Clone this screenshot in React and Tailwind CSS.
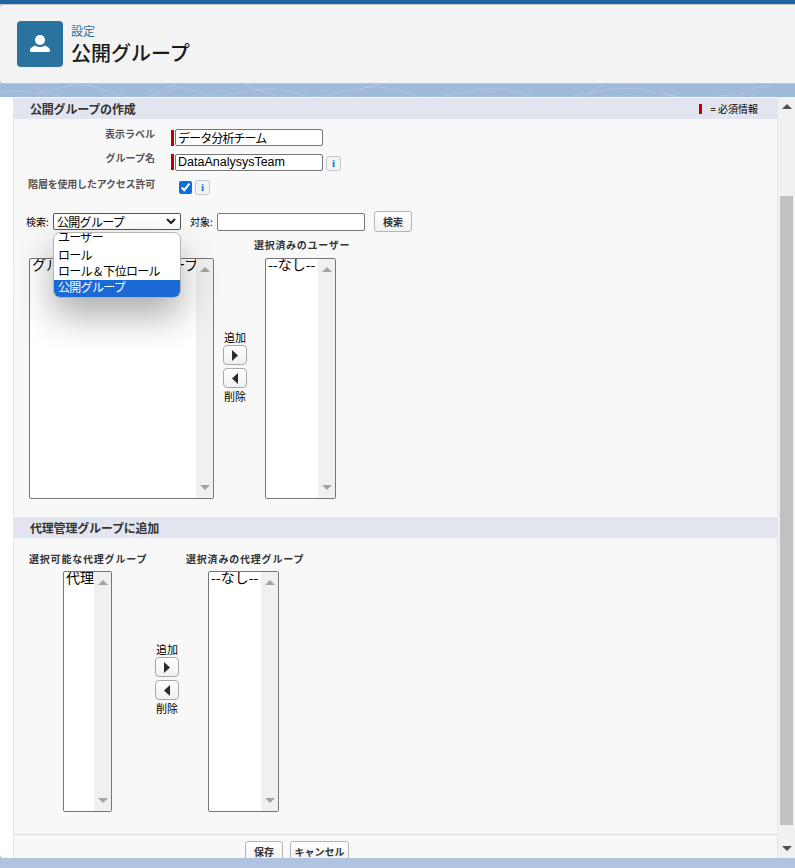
import React from 'react';

const FONT = "font-['Noto_Sans_CJK_JP','Liberation_Sans',sans-serif]";

function Contours({ className }) {
  // faint topographic lines in the page background
  return (
    <svg className={className} width="795" height="13" viewBox="0 0 795 13" fill="none" stroke="#ffffff" strokeOpacity="0.16" strokeWidth="1">
      <path d="M0 9C20 2 35 14 55 6S90 0 110 8s40 6 60-2 30 8 50 6 40-10 60-6 30 10 55 4 40-10 60-4 30 10 60 4 40-8 60-2 40 8 70 2 50-8 70-2 40 6 90 2" />
      <path d="M30 0c10 6 20 10 14 13M150 13c8-6 18-10 26-13M245 0c14 8 26 8 34 13M360 13c-6-6 6-12 22-13M480 2a9 6 0 1 0 18 0M585 13c8-8 16-10 20-13M660 0c-4 6 8 12 20 13M740 13c4-6 14-10 30-11" />
    </svg>
  );
}

function Triangle({ dir, className }) {
  const d = {
    up: 'M0 6 L5 1 L10 6 Z',
    down: 'M0 1 L10 1 L5 6 Z',
  }[dir];
  return (
    <svg width="10" height="7" viewBox="0 0 10 7" className={className} fill="currentColor">
      <path d={d} />
    </svg>
  );
}

function ListBox({ width, text }) {
  return (
    <div style={{ width }} className="flex h-[241px] shrink-0 overflow-hidden rounded-[2px] border border-[#767676] bg-white">
      <div className="-mt-[2px] min-w-0 flex-1 overflow-hidden whitespace-nowrap pl-[2px] text-[14px] leading-[14px] text-black">{text}</div>
      <div className="flex w-[17px] shrink-0 flex-col items-center justify-between bg-[#f0f0f0] py-[7px] text-[#a3a3a3]">
        <Triangle dir="up" />
        <Triangle dir="down" />
      </div>
    </div>
  );
}

function MoveButtons() {
  return (
    <div className="flex w-[24px] flex-col items-center text-[11px] leading-[14px] text-black">
      <span className="mb-[1px]">追加</span>
      <button className="flex h-[20px] w-[24px] items-center justify-center rounded-[4px] border border-[#a9a9a9] bg-gradient-to-b from-white to-[#f0f0f0]">
        <svg width="6" height="11" viewBox="0 0 6 11" fill="#2b2b2b"><path d="M0 0 L6 5.5 L0 11 Z" /></svg>
      </button>
      <button className="mt-[3px] flex h-[20px] w-[24px] items-center justify-center rounded-[4px] border border-[#a9a9a9] bg-gradient-to-b from-white to-[#f0f0f0]">
        <svg width="6" height="11" viewBox="0 0 6 11" fill="#2b2b2b"><path d="M6 0 L0 5.5 L6 11 Z" /></svg>
      </button>
      <span className="mt-[1px]">削除</span>
    </div>
  );
}

function InfoButton() {
  return (
    <span className="flex h-[15px] w-[15px] shrink-0 items-center justify-center rounded-[3px] border border-[#c9c9c9] bg-[#f3f3f3] font-['Liberation_Serif',serif] text-[11px] font-bold leading-none text-[#0b6fd6]">
      i
    </span>
  );
}

function SectionHeader({ children, right }) {
  return (
    <div className="flex h-[21px] items-center justify-between bg-[#e2e5ef] pl-[16px] pr-[19px]">
      <h3 className="text-[12px] font-bold leading-none tracking-[-0.2px] text-[#333]">{children}</h3>
      {right}
    </div>
  );
}

function PlainButton({ children, className = '' }) {
  return (
    <button className={`rounded-[3px] border border-[#b5b5b5] bg-gradient-to-b from-white to-[#f1f1f1] text-[10px] font-bold leading-none text-[#333] ${className}`}>
      {children}
    </button>
  );
}

export default function App() {
  return (
    <div className={`${FONT} flex h-[868px] w-[795px] flex-col overflow-hidden bg-[#b0c4df]`}>
      <div className="h-[4px] shrink-0 bg-[#2164a4]" />

      {/* Page header */}
      <div className="flex h-[80px] shrink-0 items-center rounded-l-[4px] border-y border-[#c4c4c4] bg-[#f3f3f3] pl-[17px]">
        <div className="flex h-[46px] w-[46px] items-center justify-center rounded-[4px] bg-[#2a739e]">
          <svg width="20" height="20" viewBox="0 0 20 20" fill="#fff">
            <circle cx="10" cy="6" r="5" />
            <path d="M0 16.5C0 13.6 3 12.4 5.5 11.4 7 12.6 8.4 13 10 13s3-.4 4.5-1.6C17 12.4 20 13.6 20 16.5c0 1-.7 1.5-1.5 1.5h-17C.7 18 0 17.5 0 16.5z" />
          </svg>
        </div>
        <div className="ml-[8px] flex flex-col">
          <span className="text-[12px] leading-[14px] text-[#2a739e]">設定</span>
          <h1 className="mt-[3px] text-[20px] font-medium leading-[24px] text-[#1a1a1a]">公開グループ</h1>
        </div>
      </div>

      <div className="h-[13px] shrink-0 bg-[#9fbadb]">
        <Contours className="block" />
      </div>

      {/* Main panel */}
      <div className="flex h-[761px] shrink-0 overflow-hidden rounded-bl-[4px] bg-white pl-[1px]">
        <div className="w-[13px] shrink-0 border-r border-[#e6e6e6] bg-white" />
        <div className="relative w-[763px] shrink-0 bg-[#f8f8f8] pt-[1px]">
          <SectionHeader
            right={
              <span className="flex items-center text-[10px] leading-none text-black">
                <span className="mr-[8px] h-[10px] w-[3px] bg-[#c00000]" />= 必須情報
              </span>
            }
          >
            公開グループの作成
          </SectionHeader>

          {/* Basic fields */}
          <div className="mt-[10px] flex items-center">
            <label className="w-[141px] -translate-y-[4px] text-right text-[10px] font-bold leading-none text-[#555]">表示ラベル</label>
            <span className="ml-[16px] h-[16px] w-[3px] bg-[#c00000]" />
            <input readOnly value="データ分析チーム" className="ml-[1px] h-[17px] w-[148px] rounded-[2px] border border-[#767676] bg-white px-[2px] text-[12px] leading-none tracking-[-0.9px] text-black outline-none" />
          </div>
          <div className="mt-[7px] flex items-center">
            <label className="w-[141px] -translate-y-[4px] text-right text-[10px] font-bold leading-none text-[#555]">グループ名</label>
            <span className="ml-[16px] h-[16px] w-[3px] bg-[#c00000]" />
            <input readOnly value="DataAnalysysTeam" className="ml-[1px] h-[17px] w-[148px] rounded-[2px] border border-[#767676] bg-white px-[2px] font-['Liberation_Sans',sans-serif] text-[12.5px] leading-none text-black outline-none" />
            <span className="ml-[3px] mt-[3px]"><InfoButton /></span>
          </div>
          <div className="mt-[9px] flex items-center">
            <label className="w-[141px] -translate-y-[4px] whitespace-nowrap text-right text-[10px] font-bold leading-none tracking-[-0.2px] text-[#555]">階層を使用したアクセス許可</label>
            <input type="checkbox" readOnly checked className="ml-[24px] h-[13px] w-[13px] accent-[#0b6fe0]" />
            <span className="ml-[3px]"><InfoButton /></span>
          </div>

          {/* Search row */}
          <div className="relative mt-[16px] flex h-[21px] items-center pl-[12px] text-[10px] leading-none text-black">
            <span className="w-[27px]">検索:</span>
            <div className="flex h-[17px] w-[128px] items-center justify-between rounded-[2px] border border-[#555] bg-white pl-[3px] pr-[4px] text-[12px] tracking-[-0.7px]">
              公開グループ
              <svg width="10" height="7" viewBox="0 0 10 7" fill="none" stroke="#222" strokeWidth="2"><path d="M1 1l4 4 4-4" /></svg>
            </div>
            <span className="ml-[9px] w-[27px]">対象:</span>
            <input readOnly className="h-[18px] w-[148px] rounded-[2px] border border-[#767676] bg-white outline-none" />
            <PlainButton className="ml-[9px] h-[21px] w-[38px]">検索</PlainButton>

            {/* open select menu */}
            <div className="absolute left-[39px] top-[21px] z-10 h-[66px] w-[128px] overflow-hidden rounded-[7px] border border-[#b5b5b5] bg-white text-[12px] leading-[16px] tracking-[-0.7px] shadow-[0_18px_36px_rgba(0,0,0,0.32)]">
              <div className="-mt-[4px] pl-[4px]">ユーザー</div>
              <div className="mt-[2px] pl-[4px]">ロール</div>
              <div className="pb-[1px] pl-[4px]">ロール &amp; 下位ロール</div>
              <div className="h-[17px] bg-[#1a69d4] pl-[4px] leading-[14px] text-white">公開グループ</div>
            </div>
          </div>

          {/* Member pickers */}
          <div className="mt-[7px] flex items-center justify-start">
            <span className="ml-[240px] w-[100px] whitespace-nowrap text-[10px] font-bold leading-[12px] tracking-[0.7px] text-[#333]">選択済みのユーザー</span>
          </div>
          <div className="mt-[7px] flex pl-[15px]">
            <ListBox width="185px" text="グループ内の公開グループとメンバー" />
            <div className="ml-[9px] mr-[18px] pt-[72px]"><MoveButtons /></div>
            <ListBox width="71px" text="--なし--" />
          </div>

          <div className="mt-[18px]">
            <SectionHeader>代理管理グループに追加</SectionHeader>
          </div>

          <div className="mt-[15px] flex text-[10px] font-bold leading-[12px] tracking-[0.8px] text-[#333]">
            <span className="ml-[15px] w-[157px] whitespace-nowrap">選択可能な代理グループ</span>
            <span className="whitespace-nowrap">選択済みの代理グループ</span>
          </div>
          <div className="mt-[6px] flex pl-[49px]">
            <ListBox width="49px" text="代理" />
            <div className="ml-[43px] mr-[29px] pt-[71px]"><MoveButtons /></div>
            <ListBox width="71px" text="--なし--" />
          </div>

          {/* Footer buttons, cut off by the panel's bottom edge */}
          <div className="mt-[22px] flex gap-[7px] border-t border-[#dcdcdc] pl-[231px] pt-[6px]">
            <PlainButton className="h-[21px] w-[38px]">保存</PlainButton>
            <PlainButton className="h-[21px] w-[59px]">キャンセル</PlainButton>
          </div>
        </div>

        {/* Page scrollbar */}
        <div className="flex w-[18px] shrink-0 flex-col items-center border-l border-[#e6e6e6] bg-[#f1f1f1] text-[#505050]">
          <Triangle dir="up" className="mt-[6px] shrink-0" />
          <div className="mt-[86px] h-[629px] w-[13px] shrink-0 bg-[#c1c1c1]" />
          <Triangle dir="down" className="mt-[20px] shrink-0" />
        </div>
      </div>
    </div>
  );
}
